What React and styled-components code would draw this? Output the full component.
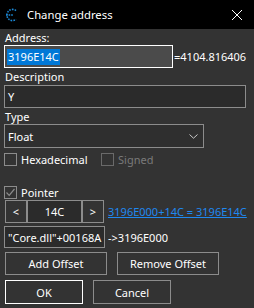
import React from "react";
import styled, { createGlobalStyle } from "styled-components";

const GlobalStyle = createGlobalStyle`
  html, body {
    margin: 0;
    padding: 0;
    background: #333333;
  }
  body {
    font-family: "Noto Sans", "Open Sans", sans-serif;
    font-size: 11px;
    line-height: 15px;
    color: #ffffff;
  }
`;

const Window = styled.div`
  width: 254px;
  height: 308px;
  background: #333333;
  display: flex;
  flex-direction: column;
  overflow: hidden;
`;

const TitleBar = styled.div`
  height: 29px;
  background: #000000;
  display: flex;
  align-items: center;
  padding: 0 11px 0 5px;
  flex-shrink: 0;
`;

const Title = styled.span`
  flex: 1;
  margin-left: 9px;
  font-size: 11.3px;
  color: #ffffff;
`;

const Body = styled.div`
  display: flex;
  flex-direction: column;
  padding: 0 4px;
`;

const Label = styled.div`
  height: 15px;
  margin-top: ${(p) => p.$top || 0}px;
  padding-left: 1px;
  color: #ffffff;
`;

const Row = styled.div`
  display: flex;
  align-items: center;
  margin-top: ${(p) => p.$top || 0}px;
`;

const TextBox = styled.div`
  box-sizing: border-box;
  width: ${(p) => p.$w}px;
  height: ${(p) => p.$h || 23}px;
  border: 1px solid ${(p) => (p.$focused ? "#ffffff" : "#8c8c8c")};
  background: ${(p) => (p.$focused ? "#4b4b4b" : "#2b2b2b")};
  display: flex;
  align-items: center;
  justify-content: ${(p) => (p.$center ? "center" : "flex-start")};
  padding: 0 ${(p) => (p.$center ? 0 : 2)}px;
  white-space: nowrap;
  overflow: hidden;
  flex-shrink: 0;
`;

const Selected = styled.span`
  background: #0078d7;
  color: #ffffff;
  padding: 0 1px;
  line-height: 16px;
`;

const Plain = styled.span`
  padding-left: ${(p) => p.$pad || 1}px;
  white-space: nowrap;
`;

const Select = styled.div`
  box-sizing: border-box;
  width: 200px;
  height: 24px;
  border: 1px solid #8c8c8c;
  background: #2f2f2f;
  display: flex;
  align-items: center;
  justify-content: space-between;
  padding: 0 5px 0 3px;
`;

const CheckRow = styled.div`
  display: flex;
  align-items: center;
  height: 15px;
  margin-top: ${(p) => p.$top || 0}px;
`;

const Check = styled.div`
  display: flex;
  align-items: center;
  width: ${(p) => (p.$w ? `${p.$w}px` : "auto")};
  color: ${(p) => (p.$disabled ? "#7a7a7a" : "#ffffff")};
`;

const Box = styled.span`
  box-sizing: border-box;
  width: 13px;
  height: 13px;
  border: 1px solid ${(p) => (p.$disabled ? "#6a6a6a" : "#8c8c8c")};
  margin-right: 4px;
  display: flex;
  align-items: center;
  justify-content: center;
`;

const Button = styled.div`
  box-sizing: border-box;
  width: ${(p) => p.$w}px;
  height: ${(p) => p.$h || 23}px;
  margin-left: ${(p) => p.$left || 0}px;
  border: 1px solid ${(p) => (p.$default ? "#ffffff" : "#8c8c8c")};
  background: #333333;
  display: flex;
  align-items: center;
  justify-content: center;
  color: #ffffff;
  flex-shrink: 0;
`;

const Link = styled.span`
  margin-left: 4px;
  color: #1f88f0;
  text-decoration: underline;
  white-space: nowrap;
`;

const Arrow = styled.span`
  margin-left: 3px;
  white-space: nowrap;
`;

const Logo = () => (
  <svg width="13" height="14" viewBox="0 0 13 14">
    <path
      d="M11 2.6 A5.6 5.6 0 1 0 11 11.4"
      fill="none"
      stroke="#1c8ad8"
      strokeWidth="1.6"
      strokeDasharray="1.6 1.1"
    />
    <path d="M1 7 H8" stroke="#1c8ad8" strokeWidth="1.4" strokeDasharray="1.6 1" />
  </svg>
);

const CloseIcon = () => (
  <svg width="12" height="12" viewBox="0 0 12 12">
    <path d="M1 1 L11 11 M11 1 L1 11" stroke="#ffffff" strokeWidth="1" />
  </svg>
);

const Chevron = () => (
  <svg width="9" height="5" viewBox="0 0 9 5">
    <path d="M0.5 0.5 L4.5 4.2 L8.5 0.5" fill="none" stroke="#c8c8c8" strokeWidth="1" />
  </svg>
);

const Tick = () => (
  <svg width="11" height="11" viewBox="0 0 11 11">
    <path d="M1.5 5.5 L4.2 8.3 L9.5 2" fill="none" stroke="#8c8c8c" strokeWidth="1.2" />
  </svg>
);

export default function App() {
  return (
    <>
      <GlobalStyle />
      <Window>
        <TitleBar>
          <Logo />
          <Title>Change address</Title>
          <CloseIcon />
        </TitleBar>
        <Body>
          <Label $top={1}>Address:</Label>
          <Row>
            <TextBox $w={169} $focused>
              <Selected>3196E14C</Selected>
            </TextBox>
            <Plain>=4104.816406</Plain>
          </Row>
          <Label $top={1}>Description</Label>
          <Row $top={1}>
            <TextBox $w={242}>
              <Plain $pad={1}>Y</Plain>
            </TextBox>
          </Row>
          <Label $top={1}>Type</Label>
          <Row>
            <Select>
              <span>Float</span>
              <Chevron />
            </Select>
          </Row>
          <CheckRow $top={4}>
            <Check $w={97}>
              <Box />
              Hexadecimal
            </Check>
            <Check $disabled>
              <Box $disabled />
              Signed
            </Check>
          </CheckRow>
          <CheckRow $top={18}>
            <Check>
              <Box>
                <Tick />
              </Box>
              Pointer
            </Check>
          </CheckRow>
          <Row>
            <Button $w={22} $left={1}>&lt;</Button>
            <TextBox $w={55} $center>14C</TextBox>
            <Button $w={22}>&gt;</Button>
            <Link>3196E000+14C = 3196E14C</Link>
          </Row>
          <Row $top={3}>
            <TextBox $w={101} $h={22}>
              <Plain>"Core.dll"+00168A</Plain>
            </TextBox>
            <Arrow>-&gt;3196E000</Arrow>
          </Row>
          <Row $top={4}>
            <Button $w={102} $left={1}>Add Offset</Button>
            <Button $w={102} $left={10}>Remove Offset</Button>
          </Row>
          <Row $top={5}>
            <Button $w={78} $h={24} $left={1} $default>OK</Button>
            <Button $w={78} $h={24} $left={10}>Cancel</Button>
          </Row>
        </Body>
      </Window>
    </>
  );
}
